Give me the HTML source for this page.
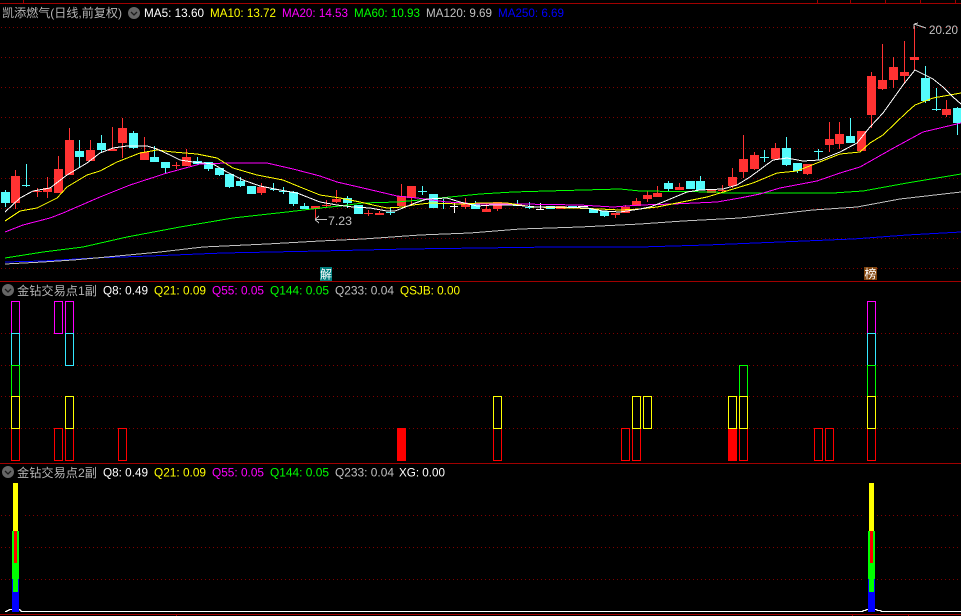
<!DOCTYPE html>
<html><head><meta charset="utf-8"><style>
html,body{margin:0;padding:0;background:#000;width:961px;height:616px;overflow:hidden}
svg{display:block;position:absolute;left:0;top:0}
text{font-family:"Liberation Sans","Noto Sans CJK SC",sans-serif;font-size:12px}
</style></head><body>
<svg width="961" height="616" viewBox="0 0 961 616" xmlns="http://www.w3.org/2000/svg">
<rect width="961" height="616" fill="#000"/>
<g shape-rendering="crispEdges" fill="none">
<!-- frame -->
<path d="M0 3.5H961M0 281.5H961M0 463.5H961M0 614.5H961M23.5 0V3M817.5 0V3M850.5 0V3M885.5 0V3M920.5 0V3M955.5 0V3M176.5 614V616M852.5 614V616M908.5 614V616" stroke="#a00000"/>
<!-- dotted grid -->
<path d="M1 27.5H961M1 57.5H961M1 87.5H961M1 117.5H961M1 148.5H961M1 178.5H961M1 208.5H961M1 238.5H961M1 268.5H961M1 333.5H961M1 365.5H961M1 396.5H961M1 428.5H961M1 515.5H961M1 547.5H961M1 579.5H961" stroke="#800000" stroke-dasharray="1 3"/>
<!-- wicks and dojis -->
<path stroke="#ff3232" d="M15.5 170V209M33 191.5H42M37.5 188V197M47.5 177V198M58.5 156V193M69.5 128V175M90.5 140V161M112.5 127V151M122.5 118V158M144.5 137V160M172 165.5H180M176.5 162V169M186.5 149V166M261.5 183V195M315.5 206V220M322 205.5H331M326.5 200V208M336.5 190V203M364 213.5H373M368.5 210V216M379.5 211V215M401.5 184V206M411.5 186V206M465.5 198V209M486.5 203V212M497.5 202V211M615.5 213V218M625.5 205V213M636.5 198V206M647.5 191V202M657.5 186V197M679.5 183V190M718 190.5H726M722.5 185V193M732.5 168V188M743.5 135V178M754.5 152V170M775.5 143V159M807.5 164V175M829.5 122V152M839.5 122V149M871.5 72V128M882.5 44V90M893.5 57V88M904.5 41V84M914.5 26V70M946.5 100V117"/>
<path stroke="#54fcfc" d="M5.5 190V207M22 185.5H30M26.5 164V187M79.5 140V167M101.5 135V152M133.5 131V149M154.5 146V162M165.5 162V173M197.5 157V164M208.5 162V171M219.5 168V176M229.5 174V188M240.5 177V187M270 189.5H278M273.5 183V191M279 191.5H288M283.5 187V194M293.5 191V206M304.5 203V209M347.5 196V208M386 212.5H395M390.5 207V215M418 191.5H427M422.5 186V195M439 203.5H448M443.5 199V209M475.5 201V209M517.5 200V205M525 207.5H534M529.5 202V209M604.5 211V217M668.5 181V192M700.5 176V190M760 157.5H769M764.5 150V162M786.5 137V166M797.5 163V173M814 151.5H823M818.5 149V160M850.5 118V143M925.5 66V103M932 109.5H941M936.5 88V111M957.5 107V135"/>
<path stroke="#fff" d="M450 206.5H458M454.5 203V213M536 209.5H544M540.5 203V210M578 206.5H588"/>
<!-- bodies -->
<path fill="#ff3232" d="M11 176h9v27h-9zM43 188h9v4h-9zM54 169h9v24h-9zM65 140h9v35h-9zM86 150h9v11h-9zM108 149h9v2h-9zM118 128h9v15h-9zM140 152h9v8h-9zM182 157h9v9h-9zM257 187h9v6h-9zM311 206h9v3h-9zM332 199h9v3h-9zM375 213h9v2h-9zM397 196h9v10h-9zM407 186h9v12h-9zM461 203h9v4h-9zM482 209h9v3h-9zM493 202h9v7h-9zM556 206h9v3h-9zM611 213h9v2h-9zM621 207h9v6h-9zM632 201h9v5h-9zM643 195h9v4h-9zM653 193h9v4h-9zM675 187h9v3h-9zM707 190h9v3h-9zM728 177h9v9h-9zM739 159h9v13h-9zM750 155h9v14h-9zM771 148h9v11h-9zM803 164h9v10h-9zM825 139h9v6h-9zM835 134h9v10h-9zM857 131h9v20h-9zM867 76h9v39h-9zM878 80h9v9h-9zM889 67h9v13h-9zM900 72h9v4h-9zM910 57h9v3h-9zM942 109h9v6h-9z"/>
<path fill="#54fcfc" d="M1 192h9v11h-9zM75 151h9v6h-9zM97 143h9v7h-9zM129 133h9v15h-9zM150 157h9v5h-9zM161 162h9v6h-9zM193 161h9v3h-9zM204 162h9v7h-9zM215 168h9v7h-9zM225 174h9v13h-9zM236 181h9v5h-9zM247 186h9v8h-9zM289 192h9v12h-9zM300 206h9v3h-9zM343 198h9v5h-9zM354 205h9v9h-9zM429 194h9v14h-9zM471 203h9v6h-9zM504 203h8v2h-8zM513 204h9v2h-9zM546 206h9v3h-9zM568 206h9v2h-9zM589 209h9v4h-9zM600 211h9v5h-9zM664 183h9v6h-9zM686 181h9v8h-9zM696 181h9v9h-9zM782 148h9v17h-9zM793 163h9v8h-9zM846 136h9v7h-9zM921 78h9v23h-9zM953 108h8v15h-8z"/>
<!-- MA lines -->
<polyline stroke="#0000ff" points="5,262 43,261 93,258 150,256 223,253 320,251 407,249 480,248 553,247 640,247 707,245 780,242 853,239 907,235 961,232"/>
<polyline stroke="#c0c0c0" points="5,264 43,262 73,260 107,257 160,252 203,247 267,244 320,241 363,239 420,235 470,233 520,229 580,227 640,224 683,221 740,218 813,210 857,207 900,199 961,192"/>
<polyline stroke="#00ff00" points="5,258 43,252 83,247 127,237 180,227 233,218 287,212 320,208 340,206 363,203 397,202 420,200 450,197 480,194 513,192 547,191 620,189 640,191 717,192 720,193 833,193 863,191 907,183 961,174"/>
<polyline stroke="#ff00ff" points="5,232 23,225 50,218 63,213 100,197 130,185 167,173 200,164 227,163 267,163 293,169 320,176 337,182 363,188 397,196 417,198 447,202 480,204 520,204 580,205 613,207 640,205 673,204 717,202 740,198 760,194 780,188 817,181 840,173 860,167 890,150 923,132 961,123"/>
<polyline stroke="#ffff00" points="5,221 20,211 37,208 57,198 67,187 87,175 100,171 117,162 140,153 157,150 173,152 197,154 217,158 233,168 257,175 283,180 300,187 320,195 340,198 360,202 373,205 387,208 403,207 413,205 430,203 460,204 480,203 507,203 533,207 573,208 600,209 620,210 640,209 657,207 677,203 707,197 730,190 753,183 777,173 797,171 817,163 840,154 860,152 870,143 883,135 907,112 915,105 933,98 961,93"/>
<polyline stroke="#ffffff" points="5,212 20,198 33,191 50,188 67,175 87,163 100,153 113,148 127,146 147,146 157,149 170,155 180,160 193,162 213,164 227,172 243,180 260,186 280,190 297,193 320,202 337,205 353,207 370,208 387,211 395,211 403,208 415,203 427,199 447,198 460,202 477,206 493,205 513,205 537,207 560,207 587,208 603,211 620,212 640,209 650,207 663,202 687,192 700,190 723,189 737,185 750,177 773,160 787,158 803,161 820,160 840,152 857,143 870,127 883,113 903,85 915,70 933,79 943,87 953,97 961,104"/>
<!-- annotations -->
<path stroke="#c0c0c0" d="M315 219.5H327M315 219.5L319 216M315 219.5L319 223M914 24L918 23M914 24V29M914 24L926 28"/>
<!-- panel 2 boxes -->
<path stroke="#ff00ff" d="M11.5 301.5h8v32h-8zM54.5 301.5h8v32h-8zM65.5 301.5h8v32h-8zM867.5 301.5h8v32h-8z"/>
<path stroke="#34e8ff" d="M11.5 333.5h8v32h-8zM65.5 333.5h8v32h-8zM867.5 333.5h8v32h-8z"/>
<path stroke="#00ff00" d="M11.5 365.5h8v31h-8zM739.5 365.5h8v31h-8zM867.5 365.5h8v31h-8z"/>
<path stroke="#ff0000" d="M11.5 428.5h8v32h-8zM54.5 428.5h8v32h-8zM65.5 428.5h8v32h-8zM118.5 428.5h8v32h-8zM493.5 428.5h8v32h-8zM621.5 428.5h8v32h-8zM632.5 428.5h8v32h-8zM739.5 428.5h8v32h-8zM814.5 428.5h8v32h-8zM825.5 428.5h8v32h-8zM867.5 428.5h8v32h-8z"/>
<path stroke="#ffff00" d="M11.5 396.5h8v32h-8zM65.5 396.5h8v32h-8zM493.5 396.5h8v32h-8zM632.5 396.5h8v32h-8zM643.5 396.5h8v32h-8zM728.5 396.5h8v32h-8zM739.5 396.5h8v32h-8zM867.5 396.5h8v32h-8z"/>
<rect x="397" y="428" width="9" height="33" fill="#ff0000"/>
<rect x="728" y="429" width="9" height="32" fill="#ff0000"/>
<!-- panel 3 bars -->
<rect x="10" y="483" width="12" height="129" fill="#000"/>
<rect x="865" y="483" width="12" height="129" fill="#000"/>
<path stroke="#fff" d="M5 611.5H7V610.5H9V609.5H20V610.5H21V611.5H863V610.5H866V609.5H877V610.5H881V611.5H961"/>
<path fill="#ffff00" d="M13 483h5v48h-5zM869 483h5v48h-5z"/>
<path fill="#00ff00" d="M12 531h7v48h-7zM868 531h7v48h-7z"/>
<path fill="#0000ff" d="M12 579h7v33h-7zM868 579h7v33h-7z"/>
<path fill="#ff0000" d="M14 531h3v32h-3zM870 531h3v32h-3z"/>
<path fill="#00ff00" d="M13 579h5v13h-5zM869 579h5v13h-5z"/>
<!-- tags -->
<rect x="320" y="267" width="12" height="14" fill="#007f7f"/>
<rect x="864" y="267" width="13" height="13" fill="#80450f"/>
</g>
<text x="326" y="278.5" fill="#fff" text-anchor="middle">解</text>
<text x="870.5" y="278" fill="#fff" text-anchor="middle">榜</text>
<text x="328" y="225" fill="#c0c0c0" textLength="24" lengthAdjust="spacingAndGlyphs">7.23</text>
<text x="929" y="34" fill="#c0c0c0" textLength="29" lengthAdjust="spacingAndGlyphs">20.20</text>
<!-- header 1 -->
<text x="2" y="17" fill="#b4b4b4" textLength="120" lengthAdjust="spacingAndGlyphs">凯添燃气(日线,前复权)</text>
<circle cx="134" cy="13" r="6" fill="#666"/><path d="M131 12l3 3 3-3" fill="none" stroke="#1c1c1c" stroke-width="1.3"/>
<text x="144" y="17" fill="#fff" textLength="60" lengthAdjust="spacingAndGlyphs">MA5: 13.60</text>
<text x="210" y="17" fill="#ffff00" textLength="66" lengthAdjust="spacingAndGlyphs">MA10: 13.72</text>
<text x="282" y="17" fill="#ff00ff" textLength="66" lengthAdjust="spacingAndGlyphs">MA20: 14.53</text>
<text x="354" y="17" fill="#00ff00" textLength="66" lengthAdjust="spacingAndGlyphs">MA60: 10.93</text>
<text x="426" y="17" fill="#c0c0c0" textLength="66" lengthAdjust="spacingAndGlyphs">MA120: 9.69</text>
<text x="498" y="17" fill="#0000ff" textLength="66" lengthAdjust="spacingAndGlyphs">MA250: 6.69</text>
<!-- header 2 -->
<circle cx="8" cy="290" r="6" fill="#666"/><path d="M5 289l3 3 3-3" fill="none" stroke="#1c1c1c" stroke-width="1.3"/>
<text x="17" y="295" fill="#b4b4b4" textLength="80" lengthAdjust="spacingAndGlyphs">金钻交易点1副</text>
<text x="103" y="294.5" fill="#fff" textLength="45" lengthAdjust="spacingAndGlyphs">Q8: 0.49</text>
<text x="154" y="294.5" fill="#ffff00" textLength="52" lengthAdjust="spacingAndGlyphs">Q21: 0.09</text>
<text x="212" y="294.5" fill="#ff00ff" textLength="52" lengthAdjust="spacingAndGlyphs">Q55: 0.05</text>
<text x="270" y="294.5" fill="#00ff00" textLength="59" lengthAdjust="spacingAndGlyphs">Q144: 0.05</text>
<text x="335" y="294.5" fill="#c0c0c0" textLength="59" lengthAdjust="spacingAndGlyphs">Q233: 0.04</text>
<text x="400" y="294.5" fill="#ffff00" textLength="60" lengthAdjust="spacingAndGlyphs">QSJB: 0.00</text>
<!-- header 3 -->
<circle cx="8" cy="472" r="6" fill="#666"/><path d="M5 471l3 3 3-3" fill="none" stroke="#1c1c1c" stroke-width="1.3"/>
<text x="17" y="477" fill="#b4b4b4" textLength="80" lengthAdjust="spacingAndGlyphs">金钻交易点2副</text>
<text x="103" y="476.5" fill="#fff" textLength="45" lengthAdjust="spacingAndGlyphs">Q8: 0.49</text>
<text x="154" y="476.5" fill="#ffff00" textLength="52" lengthAdjust="spacingAndGlyphs">Q21: 0.09</text>
<text x="212" y="476.5" fill="#ff00ff" textLength="52" lengthAdjust="spacingAndGlyphs">Q55: 0.05</text>
<text x="270" y="476.5" fill="#00ff00" textLength="59" lengthAdjust="spacingAndGlyphs">Q144: 0.05</text>
<text x="335" y="476.5" fill="#c0c0c0" textLength="59" lengthAdjust="spacingAndGlyphs">Q233: 0.04</text>
<text x="399" y="476.5" fill="#fff" textLength="46" lengthAdjust="spacingAndGlyphs">XG: 0.00</text>
</svg>
</body></html>
